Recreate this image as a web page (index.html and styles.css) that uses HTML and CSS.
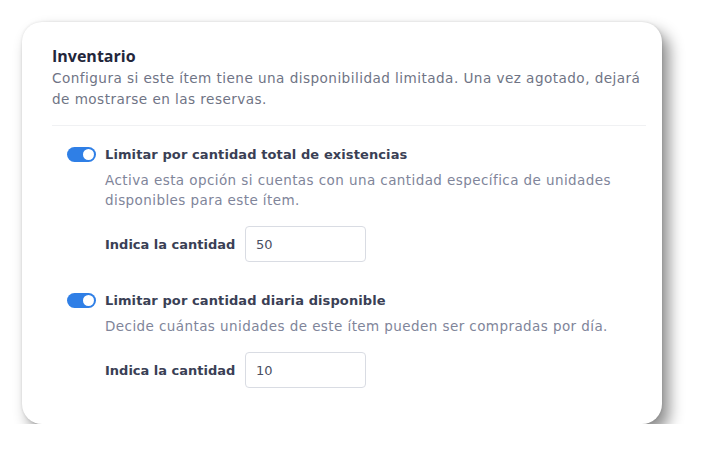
FILE: index.html
```html
<!DOCTYPE html>
<html lang="es">
<head>
<meta charset="utf-8">
<link rel="stylesheet" href="styles.css">
</head>
<body>
<div class="card">
  <h2 class="title">Inventario</h2>
  <p class="intro">Configura si este ítem tiene una disponibilidad limitada. Una vez agotado, dejará de mostrarse en las reservas.</p>
  <div class="divider"></div>
  <div class="options">
    <div class="option">
      <div class="head">
        <span class="toggle"><span class="knob"></span></span>
        <span class="label">Limitar por cantidad total de existencias</span>
      </div>
      <p class="desc">Activa esta opción si cuentas con una cantidad específica de unidades disponibles para este ítem.</p>
      <div class="field">
        <span class="field-label">Indica la cantidad</span>
        <div class="input">50</div>
      </div>
    </div>
    <div class="option">
      <div class="head">
        <span class="toggle"><span class="knob"></span></span>
        <span class="label">Limitar por cantidad diaria disponible</span>
      </div>
      <p class="desc">Decide cuántas unidades de este ítem pueden ser compradas por día.</p>
      <div class="field">
        <span class="field-label">Indica la cantidad</span>
        <div class="input">10</div>
      </div>
    </div>
  </div>
</div>
</body>
</html>
```
FILE: styles.css
```css
* { box-sizing: border-box; }
html, body { margin: 0; padding: 0; background: #ffffff; }
body { font-family: "DejaVu Sans", "Open Sans", sans-serif; color: #3a3f55; }
.card {
  margin: 22px 0 0 22px;
  width: 640px;
  height: 402px;
  padding: 24px 16px 0 30px;
  background: #fff;
  border-radius: 20px;
  box-shadow: 0 0 3px rgba(0,0,0,0.12), 7px 9px 15px rgba(0,0,0,0.45);
}
.title {
  margin: 0;
  font-family: "Open Sans", sans-serif;
  font-size: 16px;
  line-height: 20px;
  font-weight: 700;
  color: #23263b;
}
.intro {
  margin: 2px 0 0 0;
  font-size: 13.6px;
  letter-spacing: 0.45px;
  line-height: 21px;
  color: #6f7485;
  max-width: 596px;
}
.divider {
  height: 1px;
  background: #f0f1f3;
  margin: 15px 0 0 0;
}
.options { padding: 20px 0 0 15px; display: flex; flex-direction: column; gap: 30px; }
.head { display: flex; align-items: center; gap: 9px; height: 16px; }
.toggle {
  width: 29px; height: 15px; border-radius: 8px;
  background: #2f7fe6;
  display: flex; align-items: center; justify-content: flex-end;
  padding-right: 2px;
}
.knob { width: 11px; height: 11px; border-radius: 50%; background: #fff; }
.label { font-size: 13px; font-weight: 700; letter-spacing: 0.1px; color: #3a3f55; }
.desc {
  margin: 8px 0 0 38px;
  font-size: 13.5px;
  letter-spacing: 0.42px;
  line-height: 20px;
  color: #80859a;
  max-width: 520px;
}
.field { display: flex; align-items: center; gap: 8px; margin: 16px 0 0 38px; }
.field-label { font-size: 13px; font-weight: 700; color: #3a3f55; width: 132px; white-space: nowrap; }
.input {
  width: 121px; height: 36px;
  border: 1px solid #d9dce3; border-radius: 4px;
  padding: 0 10px;
  display: flex; align-items: center;
  font-size: 13px; color: #4a4f63;
}
```
